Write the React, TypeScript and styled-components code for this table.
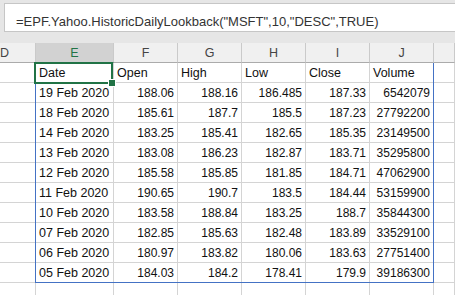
import { Fragment } from "react";
import styled, { createGlobalStyle } from "styled-components";

const GlobalStyle = createGlobalStyle`
  body {
    margin: 0;
    background: #ffffff;
    font-family: "Liberation Sans", Arial, sans-serif;
    overflow: hidden;
  }
`;

const Sheet = styled.div`
  width: 455px;
  height: 295px;
  overflow: hidden;
  background: #e6e6e6;
`;

const FormulaStrip = styled.div`
  height: 43px;
  padding: 3px 0 0 4px;
  box-sizing: border-box;
  background: #e6e6e6;
`;

const FormulaBox = styled.div`
  height: 29px;
  box-sizing: border-box;
  background: #ffffff;
  border: 1px solid #c6c6c6;
  border-right: none;
  padding: 10px 0 0 11px;
  font-size: 13px;
  line-height: 15px;
  color: #333333;
  white-space: nowrap;
`;

// cells and overlays share one stacked area
const Stack = styled.div`
  display: grid;
  & > * {
    grid-area: 1 / 1;
  }
`;

const Grid = styled.div`
  display: grid;
  grid-template-columns: 36px 78px repeat(5, 64px) 1fr;
  grid-template-rows: repeat(13, 20px);
  background: #ffffff;
`;

const OverlayGrid = styled(Grid)`
  background: transparent;
  pointer-events: none;
`;

const ColHeader = styled.div<{ $selected?: boolean; $start?: boolean }>`
  display: flex;
  align-items: center;
  justify-content: ${(p) => (p.$start ? "flex-start" : "center")};
  box-sizing: border-box;
  background: ${(p) => (p.$selected ? "#d2d2d2" : "#f0f0f0")};
  border-right: 1px solid #cacaca;
  border-bottom: 1px solid ${(p) => (p.$selected ? "#217346" : "#ababab")};
  font-size: 12.5px;
  line-height: 14px;
  color: ${(p) => (p.$selected ? "#217346" : "#444444")};
`;

const Cell = styled.div<{ $num?: boolean }>`
  display: flex;
  align-items: flex-end;
  justify-content: ${(p) => (p.$num ? "flex-end" : "flex-start")};
  box-sizing: border-box;
  padding: 0 3px 2px 3px;
  border-right: 1px solid #d4d4d4;
  border-bottom: 1px solid #d4d4d4;
  font-size: ${(p) => (p.$num ? "12px" : "12.5px")};
  line-height: 14px;
  color: #111111;
  white-space: nowrap;
  overflow: hidden;
`;

const SpillRange = styled.div`
  grid-column: 2 / 8;
  grid-row: 2 / 13;
  margin-left: -1px;
  border: 1px solid #4472c4;
  border-top: none;
`;

const Selection = styled.div`
  grid-column: 2 / 3;
  grid-row: 2 / 3;
  margin: -1px 1px -1px -2px;
  border: 2px solid #217346;
  position: relative;
`;

const FillHandle = styled.span`
  position: absolute;
  right: -5px;
  bottom: -5px;
  width: 6px;
  height: 6px;
  background: #217346;
  border: 1px solid #ffffff;
`;

const columns = ["D", "E", "F", "G", "H", "I", "J", ""];

const header = ["Date", "Open", "High", "Low", "Close", "Volume"];

const rows: string[][] = [
  ["19 Feb 2020", "188.06", "188.16", "186.485", "187.33", "6542079"],
  ["18 Feb 2020", "185.61", "187.7", "185.5", "187.23", "27792200"],
  ["14 Feb 2020", "183.25", "185.41", "182.65", "185.35", "23149500"],
  ["13 Feb 2020", "183.08", "186.23", "182.87", "183.71", "35295800"],
  ["12 Feb 2020", "185.58", "185.85", "181.85", "184.71", "47062900"],
  ["11 Feb 2020", "190.65", "190.7", "183.5", "184.44", "53159900"],
  ["10 Feb 2020", "183.58", "188.84", "183.25", "188.7", "35844300"],
  ["07 Feb 2020", "182.85", "185.63", "182.48", "183.89", "33529100"],
  ["06 Feb 2020", "180.97", "183.82", "180.06", "183.63", "27751400"],
  ["05 Feb 2020", "184.03", "184.2", "178.41", "179.9", "39186300"],
];

const App = () => {
  return (
    <>
      <GlobalStyle />
      <Sheet>
        <FormulaStrip>
          <FormulaBox>=EPF.Yahoo.HistoricDailyLookback("MSFT",10,"DESC",TRUE)</FormulaBox>
        </FormulaStrip>
        <Stack>
          <Grid>
            {columns.map((c, i) => (
              <ColHeader key={"h" + i} $selected={c === "E"} $start={c === "D"}>
                {c}
              </ColHeader>
            ))}

            <Cell />
            {header.map((h) => (
              <Cell key={h}>{h}</Cell>
            ))}
            <Cell />

            {rows.map((r) => (
              <Fragment key={r[0]}>
                <Cell />
                {r.map((v, j) => (
                  <Cell key={j} $num={j > 0}>
                    {v}
                  </Cell>
                ))}
                <Cell />
              </Fragment>
            ))}

            {columns.map((_, i) => (
              <Cell key={"e" + i} />
            ))}
          </Grid>
          <OverlayGrid>
            <SpillRange />
            <Selection>
              <FillHandle />
            </Selection>
          </OverlayGrid>
        </Stack>
      </Sheet>
    </>
  );
};

export default App;
